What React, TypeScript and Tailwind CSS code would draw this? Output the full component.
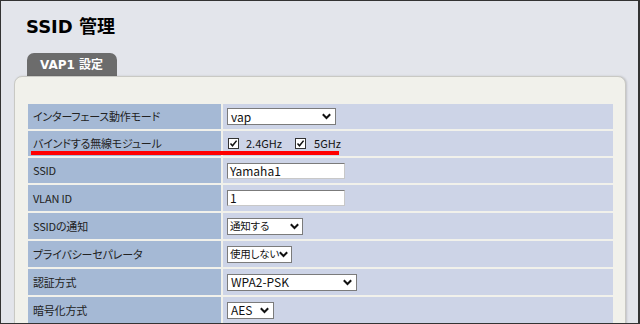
import React from "react";

const jp = "font-['Noto_Sans_CJK_JP',sans-serif]";

const Chevron = () => (
  <svg width="9" height="7" viewBox="0 0 9 7" className="shrink-0">
    <path d="M0.8 1.2 L4.5 5 L8.2 1.2" fill="none" stroke="#111" strokeWidth="2" />
  </svg>
);

const Select = ({ value, width, small }: { value: string; width: string; small?: boolean }) => (
  <div
    className={`${width} h-[17px] bg-white border border-[#7b7b7b] flex items-center justify-between leading-none text-[#111] ${
      small ? "pl-[2px] pr-[3px] text-[10.5px] tracking-[-0.2px] [font-feature-settings:'palt']" : "pl-[3px] pr-[4px] text-[12px]"
    }`}
  >
    <span className="whitespace-nowrap">{value}</span>
    <Chevron />
  </div>
);

const TextInput = ({ value }: { value: string }) => (
  <div className="w-[118px] h-[16px] bg-white border border-[#7b7b7b] border-b-[#c8c8c8] border-r-[#c8c8c8] flex items-center pl-[2px] text-[12px] leading-none text-[#111]">
    {value}
  </div>
);

const Check = () => (
  <div className="w-[11px] h-[11px] bg-white border border-[#333] flex items-center justify-center">
    <svg width="9" height="9" viewBox="0 0 9 9">
      <path d="M1.5 4.5 L3.5 6.8 L7.6 1.6" fill="none" stroke="#111" strokeWidth="1.5" />
    </svg>
  </div>
);

const rows: { label: string; h: string; control: React.ReactNode }[] = [
  { label: "インターフェース動作モード", h: "h-[25px]", control: <Select value="vap" width="w-[109px]" /> },
  {
    label: "バインドする無線モジュール",
    h: "h-[25px]",
    control: (
      <div className="flex items-center text-[11px] text-[#111] pl-[1px]">
        <Check />
        <span className="ml-[7px]">2.4GHz</span>
        <span className="ml-[13px]"><Check /></span>
        <span className="ml-[8px]">5GHz</span>
      </div>
    ),
  },
  { label: "SSID", h: "h-[25px]", control: <TextInput value="Yamaha1" /> },
  { label: "VLAN ID", h: "h-[26px]", control: <TextInput value="1" /> },
  { label: "SSIDの通知", h: "h-[26px]", control: <Select value="通知する" width="w-[76px]" small /> },
  { label: "プライバシーセパレータ", h: "h-[26px]", control: <Select value="使用しない" width="w-[65px]" small /> },
  { label: "認証方式", h: "h-[26px]", control: <Select value="WPA2-PSK" width="w-[130px]" /> },
  { label: "暗号化方式", h: "h-[26px]", control: <Select value="AES" width="w-[47px]" /> },
];

export default function App() {
  return (
    <div className={`relative w-[640px] h-[324px] overflow-hidden bg-[#e3e5eb] border border-[#333] border-r-2 ${jp}`}>
      <h1 className="pl-[25px] pt-[15px] h-[52px] text-[18px] leading-[22px] font-bold text-black font-['DejaVu_Sans','Noto_Sans_CJK_JP',sans-serif]">
        SSID 管理
      </h1>

      <div className="ml-[26px] w-[90px] h-[23px] rounded-t-[7px] bg-[#6c6c6c] flex items-center pl-[13px] text-[12px] font-bold text-white font-['DejaVu_Sans','Noto_Sans_CJK_JP',sans-serif]">
        VAP1 設定
      </div>

      <div className="ml-[13px] w-[612px] h-[260px] rounded-t-[8px] border border-[#c9c9c4] bg-[#f1f1eb] pt-[27px] pl-[13px] shadow-[1px_0_2px_rgba(0,0,0,0.15)]">
        <div className="grid grid-cols-[193px_390px] gap-x-[2px] gap-y-[2px]">
          {rows.map((r) => (
            <React.Fragment key={r.label}>
              <div className={`${r.h} bg-[#a5b9d5] flex items-center pl-[5px] text-[11px] tracking-[-0.2px] text-[#222] [font-feature-settings:'palt']`}>
                {r.label}
              </div>
              <div className={`${r.h} bg-[#cdd4e7] flex items-center pl-[4px]`}>{r.control}</div>
            </React.Fragment>
          ))}
        </div>
      </div>

      <div className="absolute left-[30px] top-[150px] w-[308px] h-[4px] bg-[#ff0000]" />
    </div>
  );
}
